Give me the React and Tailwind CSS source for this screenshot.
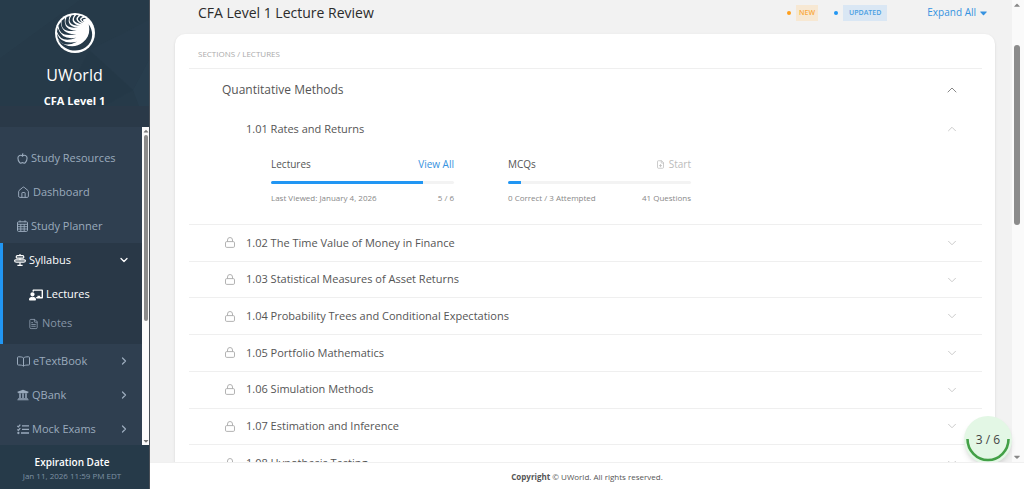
import React, { useState } from 'react';
import { Apple, ChevronDown, ChevronRight, ChevronUp, FilePlus, FileText, House } from 'lucide-react';
import { FaCaretDown, FaCaretUp, FaChalkboardTeacher, FaUniversity } from 'react-icons/fa';

const lockedLectures = [
  '1.02 The Time Value of Money in Finance',
  '1.03 Statistical Measures of Asset Returns',
  '1.04 Probability Trees and Conditional Expectations',
  '1.05 Portfolio Mathematics',
  '1.06 Simulation Methods',
  '1.07 Estimation and Inference',
  '1.08 Hypothesis Testing',
];

const Logo = () => (
  <svg viewBox="0 0 120 120" className="w-10 h-10" aria-label="UWorld logo">
    <circle cx="60" cy="60" r="60" fill="#fff" />
    <g fill="#263a49">
      {/* lower crescent between the wing and the ring */}
      <path d="M9 80C32 104 62 106 84 88C101 74 106 56 101 34C118 58 114 86 92 103C64 122 24 112 9 80Z" />
      {/* feather gaps */}
      <path d="M6 62Q20 96 66 86Q24 108 8 75Z" />
      <path d="M8 44Q20 82 64 74Q18 92 6 56Z" />
      <path d="M17 27Q20 66 64 63Q14 76 10 38Z" />
      <path d="M30 15Q24 52 65 53Q14 60 20 23Z" />
      <path d="M44 9Q32 40 69 45Q20 46 35 12Z" />
      <path d="M58 6Q42 30 75 39Q30 36 50 7Z" />
      <path d="M71 7Q54 22 80 34Q44 26 64 6Z" />
      <path d="M83 11Q66 18 85 30Q57 20 77 8Z" />
      <path d="M94 18Q77 16 88 27Q70 18 88 14Z" />
    </g>
  </svg>
);

const Facets = () => (
  <svg viewBox="0 0 150 106" preserveAspectRatio="none" className="absolute inset-0 w-full h-full" aria-hidden="true">
    <path d="M0 58L80 0H0Z" fill="#2b4251" opacity=".4" />
    <path d="M90 50L134 90L150 60V20Z" fill="#2a4050" opacity=".3" />
    <path d="M90 50L134 90L105 106H60Z" fill="#233645" opacity=".4" />
    <path d="M134 90L150 60V106H140Z" fill="#2c4454" opacity=".4" />
  </svg>
);

const AppleIcon = () => <Apple className="w-[11px] h-[13px]" strokeWidth={2.4} />;

const CalendarIcon = () => (
  <svg viewBox="0 0 11 12" className="w-[11px] h-3" fill="none" stroke="currentColor">
    <rect x=".5" y="1.8" width="10" height="9.6" rx="1" />
    <path d="M3 .3v2M8 .3v2M.5 4.3h10M.5 6.7h10M.5 9h10M3.8 4v7M7.2 4v7" strokeWidth=".9" />
  </svg>
);

const SyllabusIcon = () => (
  <svg viewBox="0 0 12 12" className="w-3 h-3" fill="none" stroke="currentColor" strokeWidth="1.2" strokeLinejoin="round">
    <path d="M6 0v1M6 8.4v2.8M3.4 11.3h5.2" />
    <path d="M3.4 1.6h5.2q1.2 0 1.2 1.3T8.6 4.2H3.4q-1.2 0-1.2-1.3t1.2-1.3z" />
    <path d="M1.6 5.8h8.8q1 0 1 .9 0 1.5-2 1.5H2.6Q.6 8.2.6 6.7q0-.9 1-.9zM6 4.2v1.6" />
  </svg>
);

const BookIcon = () => (
  <svg viewBox="0 0 13 11" className="w-[13px] h-[11px]" fill="none" stroke="currentColor" strokeLinejoin="round">
    <path d="M6.5 2C5.5 1 4 .8 1.3.8Q.5.8.5 1.6V8.4Q.5 9 1.3 9C4 9 5.5 9.2 6.5 10.2C7.5 9.2 9 9 11.7 9Q12.5 9 12.5 8.4V1.6Q12.5.8 11.7.8C9 .8 7.5 1 6.5 2ZM6.5 2v8" />
  </svg>
);

const TasksIcon = () => (
  <svg viewBox="0 0 12 11" className="w-3 h-[11px]" fill="none" stroke="currentColor" strokeWidth="1.3">
    <path d="M5 1.8h7M5 5.4h7M4 9h8M.4 1.9l1 1L3.3.6M.4 5.4l1 1 1.9-2.3" />
    <circle cx="1.4" cy="9" r=".5" />
  </svg>
);

const LockIcon = () => (
  <svg viewBox="0 0 10 11" className="w-[10px] h-[11px] text-[#aaa]" fill="none" stroke="currentColor" strokeWidth=".9">
    <rect x=".5" y="4.6" width="9" height="5.8" rx="1.2" />
    <path d="M2.5 4.6V3a2.5 2.5 0 0 1 5 0v1.6" />
  </svg>
);

const NavItem = ({ icon, label, expandable }) => (
  <a href="#" className="flex items-center h-[34px] pl-[17px] pr-3 gap-[3px] text-[#9babbd]">
    {icon}
    <span className="flex-1">{label}</span>
    {expandable && <ChevronRight className="w-3 h-3" strokeWidth={2.5} />}
  </a>
);

const Sidebar = () => (
  <aside className="flex flex-col w-[150px] shrink-0 bg-[#2a3948] border-r border-[#4a5058] text-white">
    <div className="h-[127px] shrink-0">
      <div className="relative h-[106px] bg-[#263a49]">
        <Facets />
        <div className="relative flex flex-col items-center pt-[13px]">
          <Logo />
          <div className="mt-3 text-base leading-5">UWorld</div>
          <div className="mt-2 text-[11px] leading-4 font-bold">CFA Level 1</div>
        </div>
      </div>
    </div>

    <div className="flex flex-1 min-h-0">
      <nav className="flex-1 overflow-hidden pt-[14px] bg-[#2f3f50] text-[11px]">
        <NavItem icon={<AppleIcon />} label="Study Resources" />
        <NavItem icon={<House className="w-[13px] h-[13px]" strokeWidth={1.8} />} label="Dashboard" />
        <NavItem icon={<CalendarIcon />} label="Study Planner" />

        <div className="pb-[6px] bg-[#293847] border-l-3 border-[#2196f3]">
          <button type="button" className="flex items-center w-full h-[34px] pl-[11px] pr-3 gap-[3px]">
            <SyllabusIcon />
            <span className="flex-1 text-left">Syllabus</span>
            <ChevronDown className="w-3 h-3" strokeWidth={2.5} />
          </button>
          <div className="pt-[3px]">
            <a href="#" className="flex items-center h-[29px] pl-[26px] gap-[3px]">
              <FaChalkboardTeacher className="w-[14px] h-[14px]" />
              Lectures
            </a>
            <a href="#" className="flex items-center h-[29px] pl-[25px] gap-[3px] text-[#8695a6]">
              <FileText className="w-[11px] h-3" strokeWidth={2} />
              Notes
            </a>
          </div>
        </div>

        <NavItem icon={<BookIcon />} label="eTextBook" expandable />
        <NavItem icon={<FaUniversity className="w-3 h-3" />} label="QBank" expandable />
        <NavItem icon={<TasksIcon />} label="Mock Exams" expandable />
      </nav>
      <div className="flex flex-col items-center w-[7px] bg-[#fbfbfb] text-[#777]">
        <FaCaretUp className="w-[6px] h-2" />
        <div className="w-1 h-[186px] rounded-full bg-[#8b8b8b]" />
        <FaCaretDown className="w-[6px] h-2 mt-auto" />
      </div>
    </div>

    <div className="h-11 shrink-0 pt-[9px] pr-[5px] bg-[#263a49] text-center">
      <div className="text-[10px] leading-4 font-semibold">Expiration Date</div>
      <div className="text-[8px] leading-3 text-[#7d91a3]">Jan 11, 2026 11:59 PM EDT</div>
    </div>
  </aside>
);

const Progress = ({ title, action, percent, left, right }) => (
  <div className="w-[183px]">
    <div className="flex items-center justify-between h-4 text-[10px] text-[#555]">
      <span>{title}</span>
      {action}
    </div>
    <div className="h-[3px] mt-[9px] rounded-full bg-[#f3f3f3] overflow-hidden">
      <div className="h-full bg-[#2196f3]" style={{ width: `${percent}%` }} />
    </div>
    <div className="flex justify-between mt-2 text-[8px] leading-3 text-[#888]">
      <span>{left}</span>
      <span>{right}</span>
    </div>
  </div>
);

const App = () => {
  const [open, setOpen] = useState(true);

  return (
    <div className="flex h-screen overflow-hidden bg-white font-['Open_Sans','Noto_Sans',sans-serif]">
      <Sidebar />

      <div className="flex flex-col flex-1 min-w-0">
        <div className="relative flex flex-1 min-h-0 overflow-hidden">
          <main className="flex-1 min-w-0 overflow-hidden pl-[25px] pr-[17px] bg-[#f2f2f2]">
            {/* Page header */}
            <header className="flex items-center h-[34px] pb-[9px] pl-[23px] pr-2">
              <h1 className="flex-1 text-sm text-[#2b2b2b]">CFA Level 1 Lecture Review</h1>
              <span className="w-1 h-1 rounded-full bg-[#ff9f1c]" />
              <span className="ml-[5px] px-[3px] text-[7px] leading-4 font-semibold text-[#f9a83a] bg-[#f7e8d3]">NEW</span>
              <span className="w-1 h-1 ml-4 rounded-full bg-[#2196f3]" />
              <span className="ml-[5px] px-[6px] text-[7px] leading-4 font-semibold text-[#4b9fe3] bg-[#dae7f4]">UPDATED</span>
              <button type="button" className="flex items-center ml-10 gap-1 text-[10px] text-[#3692e0]">
                Expand All
                <FaCaretDown className="w-[7px] h-3" />
              </button>
            </header>

            <section className="pl-[14px] pr-[13px] rounded-t-[10px] bg-white shadow-sm">
              <div className="h-[35px] pt-[14px] pl-[9px] border-b border-[#efefef] text-[8px] leading-3 text-[#aaa]">
                SECTIONS / LECTURES
              </div>
              <button
                type="button"
                onClick={() => setOpen(!open)}
                className="flex items-center justify-between w-full h-[42px] pl-[33px] pr-[22px] text-xs text-[#555]"
              >
                Quantitative Methods
                <ChevronUp className="w-4 h-4 text-[#888]" strokeWidth={1.5} />
              </button>

              {open && (
                <>
                  <button type="button" className="flex items-center justify-between w-full h-9 pl-[57px] pr-[23px] text-[11px] text-[#555]">
                    1.01 Rates and Returns
                    <ChevronUp className="w-[14px] h-[14px] text-[#c4c4c4]" strokeWidth={1.5} />
                  </button>
                  <div className="flex gap-[54px] h-[78px] pt-[9px] pl-[82px] border-b border-[#efefef]">
                    <Progress
                      title="Lectures"
                      action={<a href="#" className="text-[#3692e0]">View All</a>}
                      percent={83.3}
                      left="Last Viewed: January 4, 2026"
                      right="5 / 6"
                    />
                    <Progress
                      title="MCQs"
                      action={
                        <button type="button" disabled className="flex items-center gap-1 text-[#bbb]">
                          <FilePlus className="w-[9px] h-[9px]" strokeWidth={2} />
                          Start
                        </button>
                      }
                      percent={7.3}
                      left="0 Correct / 3 Attempted"
                      right="41 Questions"
                    />
                  </div>

                  <ul className="grid auto-rows-fr h-[257px]">
                    {lockedLectures.map((lecture) => (
                      <li key={lecture} className="border-b border-[#efefef]">
                        <button type="button" className="flex items-center w-full h-full pl-9 pr-[23px] text-[11px] text-[#555]">
                          <LockIcon />
                          <span className="flex-1 ml-[11px] text-left">{lecture}</span>
                          <ChevronDown className="w-[14px] h-[14px] text-[#c4c4c4]" strokeWidth={1.5} />
                        </button>
                      </li>
                    ))}
                  </ul>
                </>
              )}
            </section>
          </main>

          {/* Page scrollbar */}
          <div className="flex flex-col items-center w-[12px] pr-[2px] bg-[#fafafa] text-[#888]">
            <FaCaretUp className="w-[6px] h-[10px]" />
            <div className="w-[6px] h-[180px] mt-[35px] rounded-full bg-[#8b8b8b]" />
            <FaCaretDown className="w-[6px] h-[10px] mt-auto" />
          </div>

          <div className="absolute right-3 -bottom-[2px] flex items-center justify-center w-12 h-12 rounded-full bg-[#e3f7e5] shadow-md text-xs text-[#444]">
            <svg viewBox="0 0 48 48" className="absolute inset-0" fill="none" aria-hidden="true">
              <path d="M3.5 23a20.5 21 0 0 0 41 0" stroke="#43a047" strokeWidth="2.6" />
            </svg>
            3 / 6
          </div>
        </div>

        <footer className="h-[27px] shrink-0 border-t border-[#f0f0f0] text-center text-[8px] leading-7 text-[#555]">
          <b>Copyright</b> © UWorld. All rights reserved.
        </footer>
      </div>
    </div>
  );
};

export default App;
